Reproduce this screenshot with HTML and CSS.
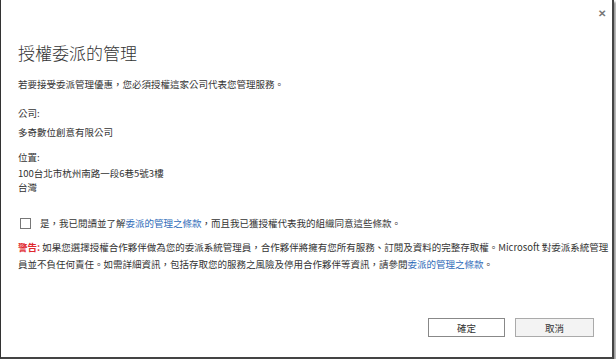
FILE: index.html
```html
<!DOCTYPE html>
<html>
<head>
    <meta charset="utf-8">
    <link rel="stylesheet" href="styles.css">
</head>
<body>
    <div class="dialog">
        <div class="top-bar">
            <span class="close-btn">&#x2715;</span>
        </div>
        <h1 class="title">授權委派的管理</h1>
        <p class="intro">若要接受委派管理優惠，您必須授權這家公司代表您管理服務。</p>

        <div class="field">
            <div class="label">公司:</div>
            <div class="value">多奇數位創意有限公司</div>
        </div>

        <div class="field">
            <div class="label">位置:</div>
            <div class="value address">100台北市杭州南路一段6巷5號3樓<br>台灣</div>
        </div>

        <label class="agree">
            <span class="check"></span>
            <span>是，我已閱讀並了解<a href="#">委派的管理之條款</a>，而且我已獲授權代表我的組織同意這些條款。</span>
        </label>

        <p class="warning"><b>警告:</b> 如果您選擇授權合作夥伴做為您的委派系統管理員，合作夥伴將擁有您所有服務、訂閱及資料的完整存取權。Microsoft 對委派系統管理<br>員並不負任何責任。如需詳細資訊，包括存取您的服務之風險及停用合作夥伴等資訊，請參閱<a href="#">委派的管理之條款</a>。</p>

        <div class="actions">
            <button class="btn btn-ok">確定</button>
            <button class="btn btn-cancel">取消</button>
        </div>
    </div>
</body>
</html>
```

FILE: styles.css
```css
body {
    margin: 0;
    background: #ffffff;
    font-family: "Noto Sans CJK TC", "Noto Sans", sans-serif;
    color: #333;
}

.dialog {
    box-sizing: border-box;
    width: 614px;
    height: 359px;
    border-left: 1px solid #333;
    border-right: 2px solid #444;
    border-bottom: 2px solid #444;
    box-shadow: 2px 2px 2px #999;
    background: white;
    padding: 0 17px;
    display: flex;
    flex-direction: column;
}

.top-bar {
    height: 41px;
    display: flex;
    justify-content: flex-end;
    align-items: flex-start;
}

.close-btn {
    margin-top: 5px;
    margin-right: -11px;
    font-size: 10px;
    color: #777;
    font-weight: bold;
}

.title {
    margin: 0;
    font-size: 17px;
    font-weight: 300;
    line-height: 24px;
    color: #333;
}

.intro {
    margin: 11px 0 0;
    font-size: 9.5px;
    line-height: 16px;
}

.field {
    margin-top: 13px;
    font-size: 9.5px;
}

.field + .field {
    margin-top: 9px;
}

.label {
    line-height: 16px;
}

.value {
    margin-top: 3px;
    line-height: 16px;
}

.address {
    margin-top: 1px;
    line-height: 14px;
}

.agree {
    margin-top: 21px;
    display: flex;
    align-items: center;
    font-size: 9.5px;
    line-height: 16px;
}

.check {
    width: 9px;
    height: 9px;
    border: 1px solid #777;
    margin: 0 9px 0 2px;
}

a {
    color: #2e6bb8;
    text-decoration: none;
}

.warning {
    margin: 8px 0 0;
    font-size: 9.5px;
    line-height: 17px;
    white-space: nowrap;
}

.warning b {
    color: #e0282e;
}

.actions {
    margin-top: auto;
    margin-bottom: 20px;
    display: flex;
    justify-content: flex-end;
    gap: 10px;
    margin-right: 1px;
}

.btn {
    width: 77px;
    height: 19px;
    font-family: "Noto Sans CJK TC", sans-serif;
    font-size: 9.5px;
    color: #333;
    padding: 0;
    border: 1px solid #888;
    background: white;
}

.btn-cancel {
    width: 79px;
    background: #f3f3f3;
    border-color: #aaa;
}
```
